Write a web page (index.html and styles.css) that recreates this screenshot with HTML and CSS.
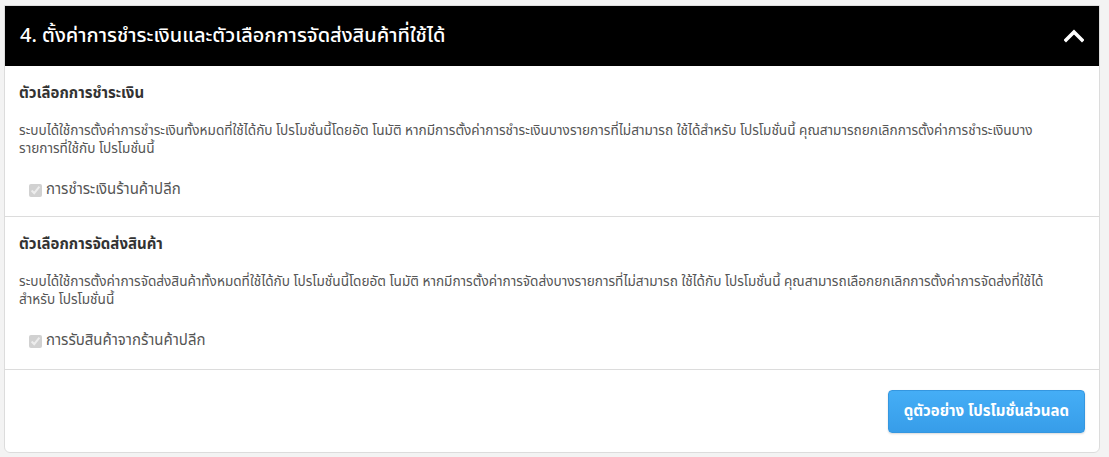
FILE: index.html
```html
<!DOCTYPE html>
<html lang="th">

<head>
    <meta charset="UTF-8">
    <meta name="viewport" content="width=device-width, initial-scale=1.0">
    <title>ตั้งค่าการชำระเงิน</title>
    <link rel="stylesheet" href="styles.css">
</head>

<body>
    <div class="panel">
        <div class="panelHead">
            <h2>4. ตั้งค่าการชำระเงินและตัวเลือกการจัดส่งสินค้าที่ใช้ได้</h2>
            <svg class="arrow" width="20" height="14" viewBox="0 0 20 14">
                <path d="M2 11 L10 3 L18 11" fill="none" stroke="#fff" stroke-width="3.6" stroke-linecap="square" />
            </svg>
        </div>
        <div class="section">
            <h3>ตัวเลือกการชำระเงิน</h3>
            <p>ระบบได้ใช้การตั้งค่าการชำระเงินทั้งหมดที่ใช้ได้กับ โปรโมชั่นนี้โดยอัต โนมัติ หากมีการตั้งค่าการชำระเงินบางรายการที่ไม่สามารถ ใช้ได้สำหรับ โปรโมชั่นนี้ คุณสามารถยกเลิกการตั้งค่าการชำระเงินบาง รายการที่ใช้กับ โปรโมชั่นนี้</p>
            <label class="check"><input type="checkbox" checked disabled> การชำระเงินร้านค้าปลีก</label>
        </div>
        <div class="section">
            <h3>ตัวเลือกการจัดส่งสินค้า</h3>
            <p>ระบบได้ใช้การตั้งค่าการจัดส่งสินค้าทั้งหมดที่ใช้ได้กับ โปรโมชั่นนี้โดยอัต โนมัติ หากมีการตั้งค่าการจัดส่งบางรายการที่ไม่สามารถ ใช้ได้กับ โปรโมชั่นนี้ คุณสามารถเลือกยกเลิกการตั้งค่าการจัดส่งที่ใช้ได้ สำหรับ โปรโมชั่นนี้</p>
            <label class="check"><input type="checkbox" checked disabled> การรับสินค้าจากร้านค้าปลีก</label>
        </div>
        <div class="panelFoot">
            <button class="btnPreview">ดูตัวอย่าง โปรโมชั่นส่วนลด</button>
        </div>
    </div>
</body>

</html>
```

FILE: styles.css
```css
* {
    margin: 0;
    padding: 0;
    box-sizing: border-box;
}

body {
    background-color: #f3f3f3;
    padding: 5px 9px 4px 4px;
    font-family: "Noto Sans Thai", "Liberation Sans", sans-serif;
    color: #333;
}

.panel {
    background-color: #fff;
    border: 1px solid #dcdcdc;
    border-radius: 0 0 6px 6px;
    overflow: hidden;
}

.panelHead {
    display: flex;
    align-items: center;
    justify-content: space-between;
    height: 60px;
    background-color: #000;
    padding: 0 15px 0 15px;
}

.panelHead h2 {
    color: #fff;
    font-size: 20px;
    font-weight: 500;
}

.section {
    padding: 16px 14px 17px 14px;
    border-bottom: 1px solid #dcdcdc;
}

.section + .section {
    padding-bottom: 19px;
}

.section h3 {
    font-size: 15px;
    font-weight: bold;
    color: #333;
    line-height: 24px;
}

.section p {
    margin-top: 16px;
    font-size: 13.6px;
    line-height: 18px;
    color: #555;
    padding-right: 10px;
}

.check {
    display: flex;
    align-items: center;
    gap: 4px;
    margin-top: 23px;
    margin-left: 10px;
    font-size: 15px;
    color: #555;
    line-height: 18px;
}

.check input {
    width: 13px;
    height: 13px;
    margin: 0;
}

.panelFoot {
    display: flex;
    justify-content: flex-end;
    padding: 20px 14px 19px;
}

.btnPreview {
    height: 43px;
    padding: 0 15px;
    border: 1px solid #3597e0;
    border-radius: 4px;
    background: linear-gradient(#45aef6, #379de9);
    color: #fff;
    font-family: inherit;
    font-size: 15px;
    font-weight: bold;
    box-shadow: 0 1px 2px rgba(0, 0, 0, .15);
}
```
